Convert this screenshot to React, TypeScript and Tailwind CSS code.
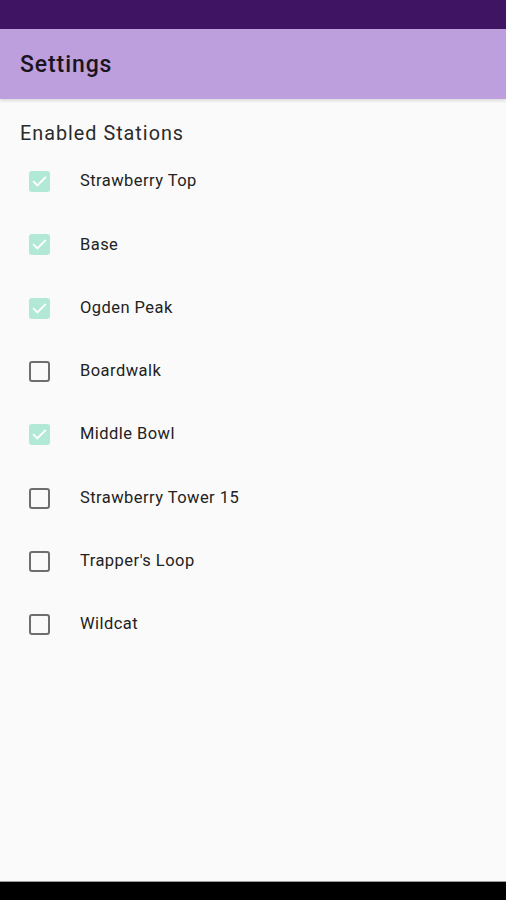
import { useState } from "react";

const STATIONS = [
  { name: "Strawberry Top", on: true },
  { name: "Base", on: true },
  { name: "Ogden Peak", on: true },
  { name: "Boardwalk", on: false },
  { name: "Middle Bowl", on: true },
  { name: "Strawberry Tower 15", on: false },
  { name: "Trapper's Loop", on: false },
  { name: "Wildcat", on: false },
];

function Check({ on }: { on: boolean }) {
  if (on) {
    return (
      <div className="w-[21px] h-[21px] rounded-[3px] bg-[#b2e8d6] flex items-center justify-center">
        <svg width="17" height="17" viewBox="0 0 24 24" fill="none" stroke="#ffffff" strokeWidth="2.8" strokeLinecap="square">
          <path d="M4 12.5l5 5L20 6.5" />
        </svg>
      </div>
    );
  }
  return <div className="w-[21px] h-[21px] rounded-[3px] border-2 border-[#6e6e6e]" />;
}

export default function App() {
  const [items, setItems] = useState(STATIONS);

  return (
    <div className="w-[506px] h-[900px] flex flex-col bg-[#fafafa] font-['Roboto',sans-serif]">
      <div className="h-[29px] bg-[#3f1463]" />
      <div className="h-[70px] bg-[#bc9fdc] flex items-center px-5 pt-[3px] shadow-[0_2px_3px_rgba(0,0,0,0.12)] z-10">
        <span className="text-[23px] font-medium tracking-[0.9px] text-[#1b1420]">Settings</span>
      </div>
      <div className="flex-1 flex flex-col">
        <div className="px-5 pt-[22px] text-[19.8px] tracking-[1px] leading-[26px] text-[#2b2b2b]">Enabled Stations</div>
        <div className="flex flex-col pt-[3px]">
          {items.map((s, i) => (
            <button
              key={s.name}
              className="h-[63.3px] flex items-center pl-[29px] text-left"
              onClick={() => setItems(items.map((x, j) => (j === i ? { ...x, on: !x.on } : x)))}
            >
              <Check on={s.on} />
              <span className="ml-[30px] text-[16.5px] tracking-[0.45px] text-[#222222]">{s.name}</span>
            </button>
          ))}
        </div>
      </div>
      <div className="h-[19px] bg-black border-t border-[#9a9a9a]" />
    </div>
  );
}
